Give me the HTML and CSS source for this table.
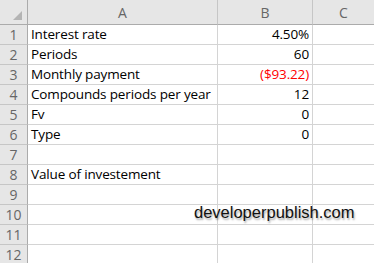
FILE: index.html
```html
<!DOCTYPE html>
<html>
<head>
<meta charset="utf-8">
<link rel="stylesheet" href="styles.css">
</head>
<body>
<div class="sheet">
  <div class="corner"><span class="tri"></span></div>
  <div class="ch">A</div>
  <div class="ch">B</div>
  <div class="ch">C</div>

  <div class="rh">1</div><div class="c">Interest rate</div><div class="c num">4.50%</div><div class="c"></div>
  <div class="rh">2</div><div class="c">Periods</div><div class="c num">60</div><div class="c"></div>
  <div class="rh">3</div><div class="c">Monthly payment</div><div class="c num red">($93.22)</div><div class="c"></div>
  <div class="rh">4</div><div class="c">Compounds periods per year</div><div class="c num">12</div><div class="c"></div>
  <div class="rh">5</div><div class="c">Fv</div><div class="c num">0</div><div class="c"></div>
  <div class="rh">6</div><div class="c">Type</div><div class="c num">0</div><div class="c"></div>
  <div class="rh">7</div><div class="c"></div><div class="c"></div><div class="c"></div>
  <div class="rh">8</div><div class="c">Value of investement</div><div class="c"></div><div class="c"></div>
  <div class="rh">9</div><div class="c"></div><div class="c"></div><div class="c"></div>
  <div class="rh">10</div><div class="c"></div><div class="c"></div><div class="c"></div>
  <div class="rh">11</div><div class="c"></div><div class="c"></div><div class="c"></div>
  <div class="rh">12</div><div class="c"></div><div class="c"></div><div class="c"></div>
  <div class="mark">developerpublish.com</div>
</div>
</body>
</html>
```
FILE: styles.css
```css
html, body {
  margin: 0;
  padding: 0;
  background: #fff;
  overflow: hidden;
}
.sheet {
  position: relative;
  display: grid;
  grid-template-columns: 28px 190px 95px 62px;
  grid-template-rows: 25px repeat(12, 20px);
  width: 375px;
  font-family: "Open Sans", "Noto Sans", sans-serif;
}
.corner, .ch, .rh, .c {
  box-sizing: border-box;
  border-right: 1px solid #d4d4d4;
  border-bottom: 1px solid #d4d4d4;
}
.corner {
  position: relative;
  background: #e6e6e6;
  border-right-color: #ababab;
  border-bottom-color: #ababab;
}
.tri {
  position: absolute;
  right: 5px;
  bottom: 4px;
  width: 0;
  height: 0;
  border-left: 9px solid transparent;
  border-bottom: 9px solid #b4b4b4;
}
.ch {
  background: #e6e6e6;
  border-bottom-color: #ababab;
  border-right-color: #c6c6c6;
  color: #666;
  font-size: 14px;
  display: flex;
  align-items: center;
  justify-content: center;
  padding-top: 1px;
}
.rh {
  background: #e6e6e6;
  border-right-color: #ababab;
  border-bottom-color: #c6c6c6;
  color: #666;
  font-size: 14px;
  display: flex;
  align-items: center;
  justify-content: center;
}
.c {
  font-size: 13.5px;
  color: #000;
  white-space: nowrap;
  overflow: visible;
  padding: 0 3px;
  line-height: 19px;
  display: flex;
  align-items: flex-end;
  letter-spacing: -0.15px;
}
.num {
  justify-content: flex-end;
}
.red {
  color: #ff0000;
}
.mark {
  position: absolute;
  left: 194px;
  top: 203px;
  font-family: "Liberation Sans", Arial, sans-serif;
  font-size: 16.5px;
  color: #111;
  text-shadow: 1px 2px 2px rgba(0,0,0,0.35);
  white-space: nowrap;
}
```
